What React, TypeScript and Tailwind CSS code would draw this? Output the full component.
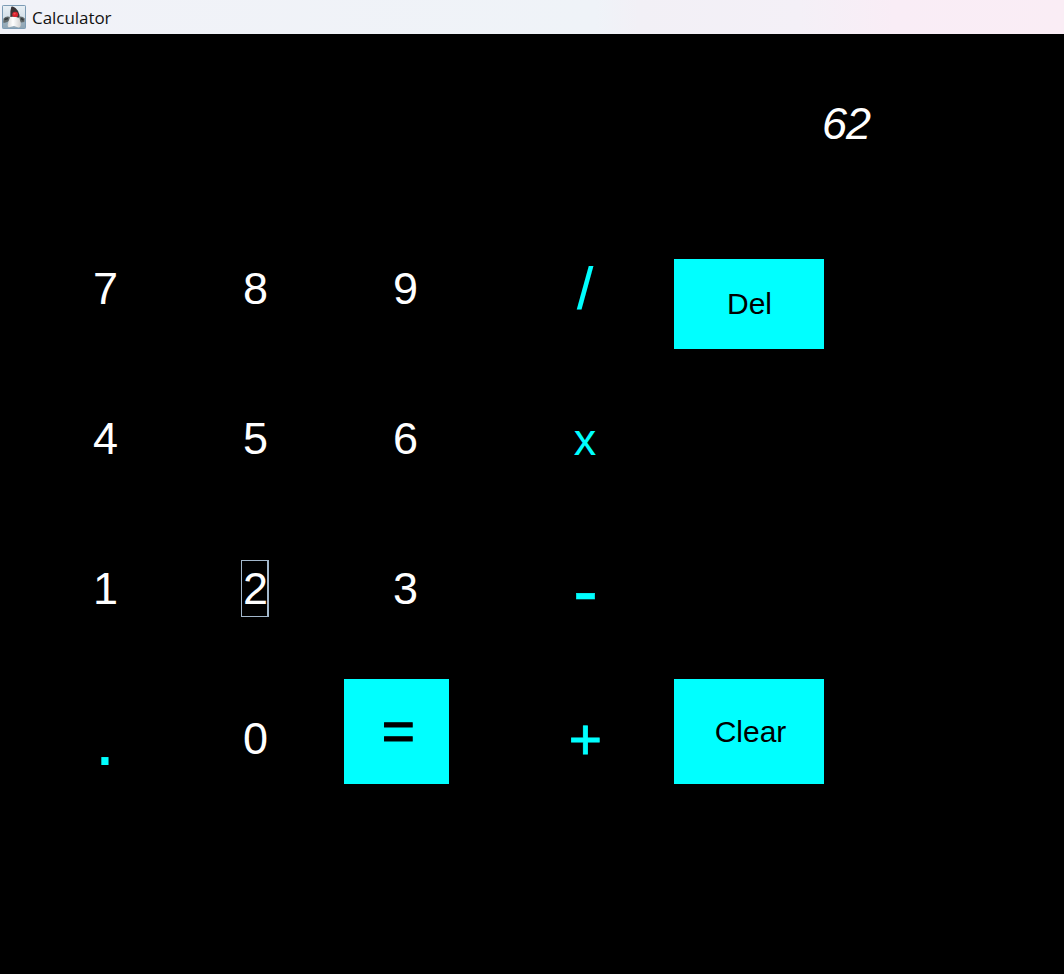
import React from "react";

type KeyProps = { label: string; className?: string; focused?: boolean };

function Key({ label, className = "text-white text-[45px] pb-[2px] pl-px", focused = false }: KeyProps) {
  return (
    <button className={`flex h-[150px] w-[150px] items-center justify-center leading-none ${className}`}>
      {focused ? (
        <span className="-ml-px flex h-[57px] w-[28px] items-center justify-center border border-r-2 border-[#a3b8cc]">
          <span className="-mr-[2px]">{label}</span>
        </span>
      ) : (
        <span>{label}</span>
      )}
    </button>
  );
}

function DukeIcon() {
  return (
    <svg className="ml-[2px] h-6 w-6" viewBox="0 0 24 24">
      <defs>
        <linearGradient id="tile" x1="0" y1="0" x2="0" y2="1">
          <stop offset="0" stopColor="#e9f0f5" />
          <stop offset="0.55" stopColor="#d3dfe8" />
          <stop offset="1" stopColor="#a3b7c6" />
        </linearGradient>
        <linearGradient id="belly" x1="0" y1="0" x2="1" y2="0">
          <stop offset="0" stopColor="#d8d8d8" />
          <stop offset="0.4" stopColor="#ffffff" />
          <stop offset="1" stopColor="#d0d0d0" />
        </linearGradient>
      </defs>
      <rect x="0.5" y="0.5" width="23" height="23" rx="0.7" fill="url(#tile)" stroke="#7d9cb5" />
      <path d="M1 17L7 16H17L23 17V23H1Z" fill="#8198a8" opacity="0.6" />
      <path d="M8.5 12Q4 10.5 1.5 13.5L1.2 17.5Q5 18.5 7.5 15ZM17 11.5Q21 11 22.8 13.5L22.5 17L19 17.5L16.5 15Z" fill="#626a6c" />
      <path d="M2.5 14.5L6 13.5M19 13.5L21.5 15" stroke="#343a3c" strokeWidth="1.5" />
      <path d="M8.3 10Q7.8 14 6.2 17.5Q4.8 22 7 22.3L12 21L16.5 22.5Q19.3 22.3 18.7 18L16.8 10Z" fill="url(#belly)" />
      <path d="M9.3 1.8Q10.8 0.7 13.5 3Q17 6 17.5 10Q17.8 12 16.5 12.8L12.5 11.5L8.3 12Q8 5.5 9.3 1.8Z" fill="#3a3335" />
      <ellipse cx="13.2" cy="9.4" rx="2.9" ry="2.6" fill="#d9232e" />
      <ellipse cx="12.6" cy="8.8" rx="1.2" ry="0.8" fill="#ed5757" />
    </svg>
  );
}

export default function App() {
  return (
    <div className="flex h-[974px] w-[1064px] flex-col overflow-hidden bg-black font-['Liberation_Sans',Arial,sans-serif]">
      <header className="flex h-[34px] shrink-0 items-center bg-[linear-gradient(90deg,#f1f2f8_0%,#eff3f8_56%,#f2f0f6_60%,#f4f0f7_75%,#f9edf6_84%,#faedf5_100%)]">
        <DukeIcon />
        <h1 className="ml-[6px] pt-[2px] font-['Open_Sans','Noto_Sans',sans-serif] text-[17px] leading-6 tracking-[-0.05px] text-[#111]">Calculator</h1>
      </header>

      <div className="flex h-[180px] w-[870px] shrink-0 items-center justify-end">
        <output className="text-[45px] italic leading-[52px] tracking-[-1px] text-white">62</output>
      </div>

      <main className="flex pl-[30px]">
        <div className="grid grid-cols-[150px_150px_150px] grid-rows-[repeat(4,150px)]">
          <Key label="7" />
          <Key label="8" />
          <Key label="9" />
          <Key label="4" />
          <Key label="5" />
          <Key label="6" />
          <Key label="1" />
          <Key label="2" focused />
          <Key label="3" />
          <Key label="." className="text-[75px] text-[#00ffff]" />
          <Key label="0" />
          <button className="ml-[14px] mt-[15px] flex h-[105px] w-[105px] items-center justify-center bg-[#00ffff] pb-px pl-[4px] text-[57px] leading-none text-black [-webkit-text-stroke:1px_#000]">=</button>
        </div>
        <div className="ml-[30px] grid grid-rows-[repeat(4,150px)]">
          <Key label="/" className="text-[60px] text-[#00ffff]" />
          <Key label="x" className="text-[45px] text-[#00ffff]" />
          <Key label="-" className="pl-px pt-[2px] text-[75px] text-[#00ffff] [-webkit-text-stroke:0.5px_#0ff]" />
          <Key label="+" className="pl-px text-[57px] text-[#00ffff] [-webkit-text-stroke:0.8px_#0ff]" />
        </div>
        <div className="ml-[14px] flex h-[570px] flex-col justify-between pt-[45px]">
          <button className="h-[90px] w-[150px] bg-[#00ffff] pl-px text-[30px] leading-[90px] text-black">Del</button>
          <button className="h-[105px] w-[150px] bg-[#00ffff] pl-[3px] text-[30px] leading-[104px] text-black">Clear</button>
        </div>
      </main>
    </div>
  );
}
